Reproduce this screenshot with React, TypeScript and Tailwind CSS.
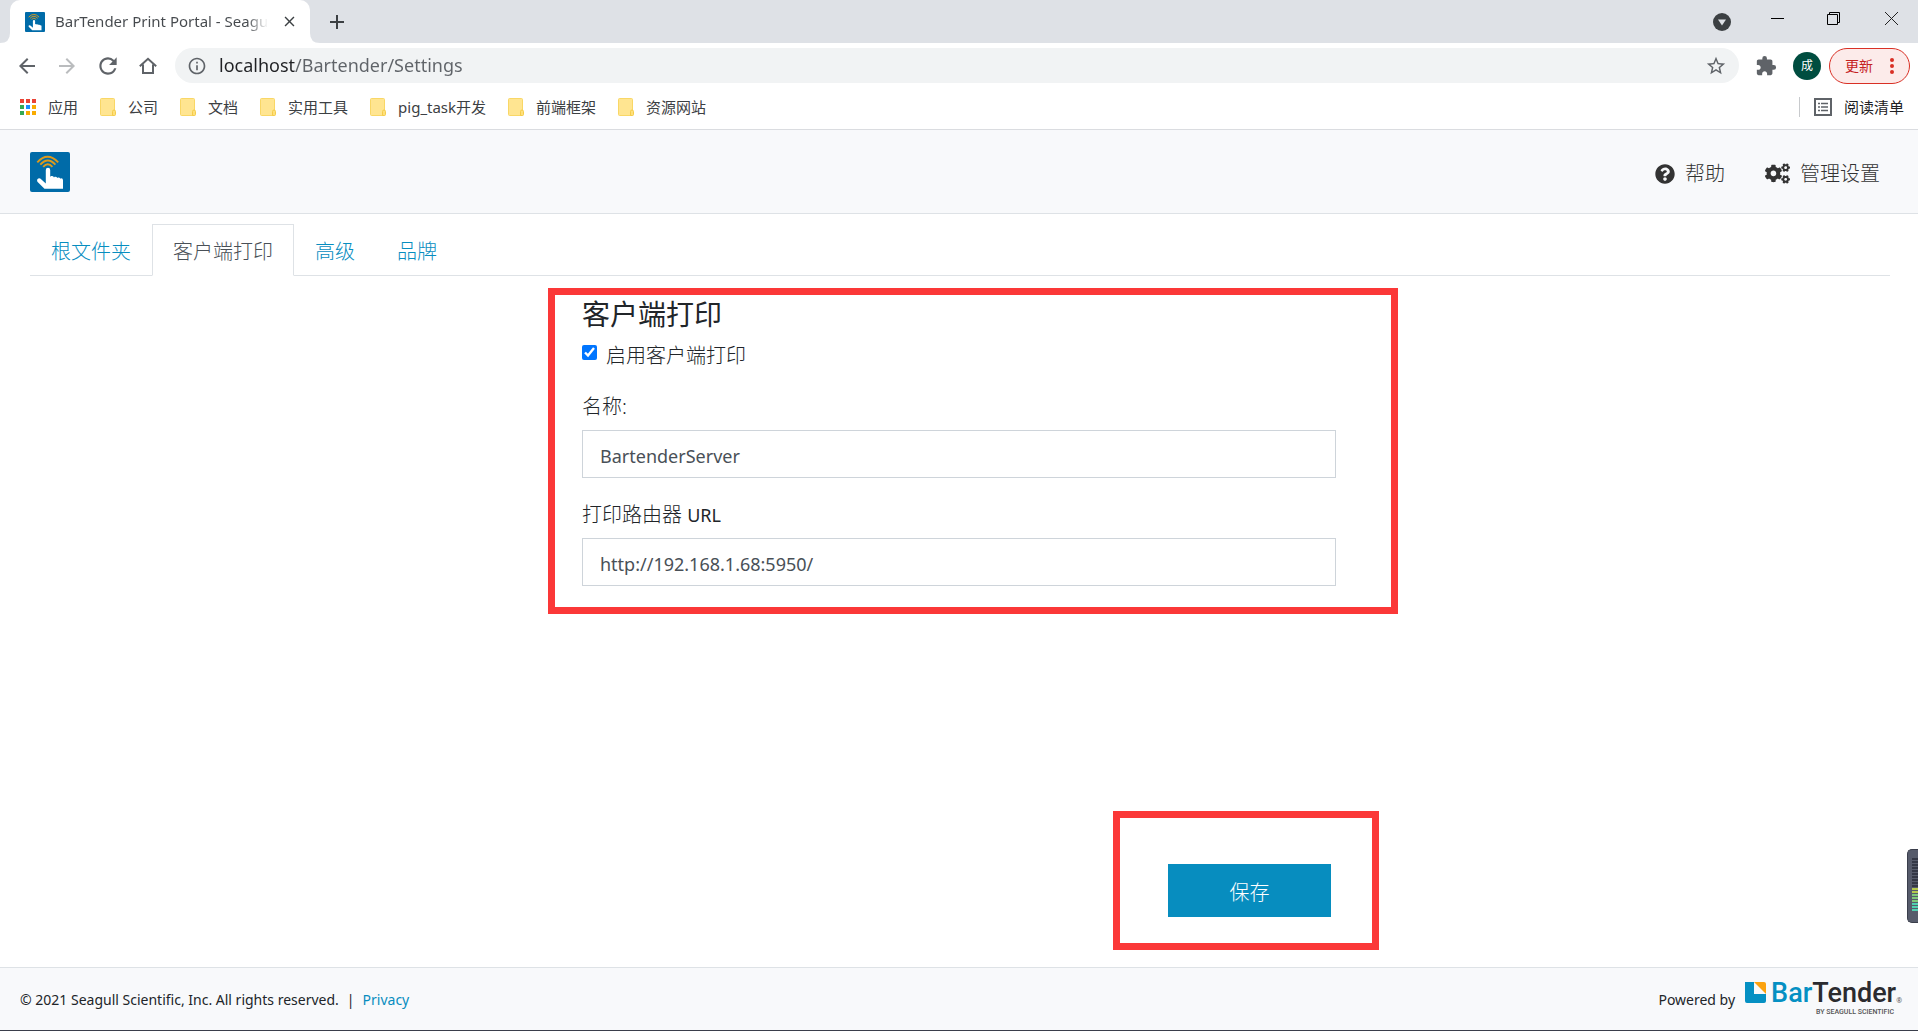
import React, { useState } from 'react';
import {
  MdArrowBack,
  MdArrowForward,
  MdRefresh,
  MdInfoOutline,
  MdStarBorder,
  MdExtension,
  MdClose,
  MdAdd,
} from 'react-icons/md';
import { FaQuestionCircle, FaCogs } from 'react-icons/fa';

const bookmarks = ['公司', '文档', '实用工具', 'pig_task开发', '前端框架', '资源网站'];
const tabs = ['根文件夹', '客户端打印', '高级', '品牌'];

const appDots = [
  'fill-[#ea4335]', 'fill-[#ea4335]', 'fill-[#ea4335]',
  'fill-[#34a853]', 'fill-[#1a8cff]', 'fill-[#f9ab00]',
  'fill-[#34a853]', 'fill-[#f9ab00]', 'fill-[#f9ab00]',
];

const meterBars = Array.from({ length: 18 }, (_, i) => i);

function PortalIcon({ className }: { className: string }) {
  return (
    <svg viewBox="0 0 40 40" className={className} aria-hidden="true">
      <rect width="40" height="40" rx="2" fill="#006ba8" />
      <g fill="none" stroke="#dd9a1c" strokeWidth="1.9">
        <path d="M7.3 10.3Q17.5 -0.8 28.2 10.3" />
        <path d="M10.3 12.6Q17.8 4.4 25.4 12.6" />
        <path d="M13.2 14.8Q17.8 9.6 22.4 14.8" />
      </g>
      <path
        d="M15.800 18a2.200 2.200 0 0 1 4.400 0v6.800l1-.8q2-.4 2.800 1.400l.6-.6q2-.4 2.700 1.300l.6-.5q1.800-.3 2.400 1.100l.6-.4q2.100-.2 2.100 1.900v8.500H14.500L7.400 29.700q-1-2.600 1-3.300 1.600-.4 3 1.200l4.400 4z"
        fill="#fff"
      />
    </svg>
  );
}

function FolderIcon() {
  return (
    <svg viewBox="0 0 16 18" className="h-[18px] w-4" aria-hidden="true">
      <rect x="0.500" y="0.500" width="14" height="17" rx="1" fill="#ffe591" stroke="#f9d766" />
      <path d="M12.500 17.500v-4q0-1.500 1.500-1.500t1.500 1.500v3q0 1-1 1z" fill="#ffe07a" stroke="#f5cc4a" />
    </svg>
  );
}

function TabStrip() {
  return (
    <div className="flex h-[43px] items-end bg-[#dee1e6]">
      <div className="relative ml-[10px] flex h-[43px] w-[300px] items-center rounded-t-[10px] bg-white pl-[15px] pr-3">
        <svg viewBox="0 0 10 10" className="absolute -left-[10px] bottom-0 h-[10px] w-[10px] fill-white" aria-hidden="true">
          <path d="M10 0v10H0Q10 10 10 0z" />
        </svg>
        <svg viewBox="0 0 10 10" className="absolute -right-[10px] bottom-0 h-[10px] w-[10px] fill-white" aria-hidden="true">
          <path d="M0 0v10h10Q0 10 0 0z" />
        </svg>
        <PortalIcon className="h-5 w-5 shrink-0" />
        <span className="ml-[10px] whitespace-nowrap bg-linear-to-r from-[#45494d] from-90% to-transparent bg-clip-text text-[15px] font-normal text-transparent">
          BarTender Print Portal - Seagu
        </span>
        <button className="ml-auto text-[#3c4043]" aria-label="Close tab">
          <MdClose size={17} />
        </button>
      </div>
      <button className="ml-[15px] flex h-[43px] items-center text-[#3c4043]" aria-label="New tab">
        <MdAdd size={24} />
      </button>
      <div className="ml-auto flex h-[43px] items-start pt-3">
        <button className="mr-10" aria-label="Search tabs">
          <svg viewBox="0 0 18 18" className="mt-px h-[18px] w-[18px]">
            <circle cx="9" cy="9" r="9" fill="#3c4043" />
            <path d="M5 6.500h8L9 12.500z" fill="#dee1e6" />
          </svg>
        </button>
        <button className="mr-[43px]" aria-label="Minimize">
          <svg viewBox="0 0 13 13" className="h-[13px] w-[13px]"><path d="M0 6.500h13" stroke="#000" /></svg>
        </button>
        <button className="mr-[45px]" aria-label="Restore">
          <svg viewBox="0 0 13 13" className="h-[13px] w-[13px]" fill="none" stroke="#000">
            <path d="M.5 2.500h10v10H.5zM2.500 2.500v-2h10v10h-2" />
          </svg>
        </button>
        <button className="mr-5" aria-label="Close window">
          <svg viewBox="0 0 13 13" className="h-[13px] w-[13px]"><path d="M0 0l13 13M13 0L0 13" stroke="#222" /></svg>
        </button>
      </div>
    </div>
  );
}

function Toolbar() {
  return (
    <div className="flex h-[45px] items-center bg-white pl-[15px] pr-2 text-[#5f6368]">
      <button aria-label="Back"><MdArrowBack size={24} /></button>
      <button className="ml-4 text-[#babcbe]" aria-label="Forward"><MdArrowForward size={24} /></button>
      <button className="ml-4" aria-label="Reload"><MdRefresh size={26} /></button>
      <button className="ml-[18px]" aria-label="Home">
        <svg viewBox="0 0 18 18" className="h-[18px] w-[18px]" fill="none" stroke="currentColor" strokeWidth="2">
          <path d="M.8 9.300L9 1.800l8.200 7.500M4 7.500V16h10V7.500" />
        </svg>
      </button>
      <div className="ml-[18px] flex h-[35px] flex-1 items-center rounded-full bg-[#f1f3f4] pl-3 pr-3">
        <MdInfoOutline size={20} />
        {/* host part is darker than the path */}
        <input
          type="text"
          aria-label="Address"
          defaultValue="localhost/Bartender/Settings"
          className="ml-3 min-w-0 flex-1 bg-linear-to-r from-[#202124] from-[76px] to-[#5f6368] to-[76px] bg-clip-text text-[18px] font-normal text-transparent outline-none"
        />
        <button aria-label="Bookmark this page"><MdStarBorder size={22} /></button>
      </div>
      <button className="ml-4" aria-label="Extensions"><MdExtension size={22} /></button>
      <button className="ml-4 h-7 w-7 rounded-full bg-[#004d40] text-[12px] font-normal text-white">成</button>
      <button className="ml-2 flex h-9 w-[81px] items-center rounded-full border border-[#d93025] bg-[#fcebea] pl-[15px] text-[14px] font-normal text-[#c5221f]">
        更新
        <svg viewBox="0 0 4 16" className="ml-[17px] h-4 w-1 fill-[#d93025]" aria-hidden="true">
          <circle cx="2" cy="2" r="2" />
          <circle cx="2" cy="8" r="2" />
          <circle cx="2" cy="14" r="2" />
        </svg>
      </button>
    </div>
  );
}

function BookmarksBar() {
  return (
    <div className="flex h-[42px] items-center border-b border-[#dadce0] bg-white pb-[3px] pl-5 pr-[14px] text-[15px] font-normal text-[#3c4043]">
      <a href="#" className="flex items-center gap-3">
        <svg viewBox="0 0 16 16" className="h-4 w-4" aria-hidden="true">
          {appDots.map((fill, i) => (
            <rect key={i} x={(i % 3) * 6} y={Math.floor(i / 3) * 6} width="4" height="4" className={fill} />
          ))}
        </svg>
        应用
      </a>
      {bookmarks.map((name) => (
        <a key={name} href="#" className="ml-[22px] flex items-center gap-3">
          <FolderIcon />
          {name}
        </a>
      ))}
      <div className="ml-auto h-5 w-px bg-[#c8cacd]" />
      <a href="#" className="ml-[14px] flex items-center gap-3 text-[#202124]">
        <svg viewBox="0 0 18 18" className="h-[18px] w-[18px]" fill="none" stroke="#5f6368" strokeWidth="2" aria-hidden="true">
          <path d="M1 1h16v16H1z" />
          <path d="M4 5.500h2M7 5.500h7M4 9h2M7 9h7M4 12.500h2M7 12.500h7" strokeWidth="1.500" />
        </svg>
        阅读清单
      </a>
    </div>
  );
}

function BarTenderLogo() {
  return (
    <a href="#" className="flex items-start" aria-label="BarTender by Seagull Scientific">
      <svg viewBox="0 0 21 21" className="h-[21px] w-[21px]" aria-hidden="true">
        <path d="M0 0h9v12h12v7q0 2-2 2H2q-2 0-2-2z" fill="#0590c3" />
        <path d="M9 0h10q2 0 2 2v10z" fill="#fba20f" />
      </svg>
      <span className="ml-[5px] flex flex-col items-end">
        <span className="flex items-end">
          <span className="font-[Roboto,sans-serif] text-[27px] leading-[22px] font-medium text-[#2b2b2f]">
            <span className="text-[#0590c3]">Bar</span>Tender
          </span>
          <span className="text-[7px] leading-[7px] text-[#555]">®</span>
        </span>
        <span className="mr-2 mt-1 font-[Roboto,sans-serif] text-[7px] leading-[8px] font-medium text-[#555]">
          BY SEAGULL SCIENTIFIC
        </span>
      </span>
    </a>
  );
}

function VolumeMeter() {
  return (
    <div className="absolute right-0 top-[849px] h-[74px] w-[11px] rounded-l-[5px] border border-r-0 border-[#3a3e4b] bg-[#565b6b]">
      <div className="ml-1 mt-2 flex flex-col gap-px">
        {meterBars.map((i) => (
          <span
            key={i}
            className={
              i < 10 ? 'h-[2px] bg-[#343846]' : i < 12 ? 'h-[2px] bg-[#b5c94c]' : i < 15 ? 'h-[2px] bg-[#7fc97a]' : 'h-[2px] bg-[#4fd0b0]'
            }
          />
        ))}
      </div>
    </div>
  );
}

function App() {
  const [active, setActive] = useState(1);
  const [enabled, setEnabled] = useState(true);

  return (
    <div className="relative flex min-h-screen flex-col overflow-hidden bg-white font-['Noto_Sans','Noto_Sans_CJK_SC',sans-serif] font-light text-[#212529]">
      {/* Browser */}
      <TabStrip />
      <Toolbar />
      <BookmarksBar />

      {/* Header */}
      <header className="flex h-[84px] items-center border-b border-[#dee2e6] bg-[#f8f9fb] pl-[30px] pr-[38px] text-[20px]">
        <PortalIcon className="h-10 w-10" />
        <a href="#" className="ml-auto flex items-center gap-[10px] pt-1 text-[#333]">
          <FaQuestionCircle size={20} />
          帮助
        </a>
        <a href="#" className="ml-10 flex items-center gap-[10px] pt-1 text-[#333]">
          <FaCogs size={25} />
          管理设置
        </a>
      </header>

      {/* Settings tabs */}
      <nav className="ml-[30px] mr-7 mt-[10px] flex border-b border-[#dee2e6] text-[20px]">
        {tabs.map((tab, i) => (
          <button
            key={tab}
            onClick={() => setActive(i)}
            className={
              i === active
                ? '-mb-px h-[52px] border border-[#dee2e6] border-b-white bg-white px-5 pt-1 text-[#495057]'
                : '-mb-px h-[52px] border border-transparent px-5 pt-1 text-[#078dbf]'
            }
          >
            {tab}
          </button>
        ))}
      </nav>

      {/* Client printing form */}
      <main className="mx-auto flex w-full max-w-[754px] flex-1 flex-col text-[20px]">
        <section className="relative pt-5">
          <h1 className="text-[28px] leading-9 font-normal">客户端打印</h1>
          <label className="mt-2 flex h-8 items-center">
            <input
              type="checkbox"
              checked={enabled}
              onChange={(e) => setEnabled(e.target.checked)}
              className="mr-[9px] mb-2 h-[15px] w-[15px] accent-[#0075ff]"
            />
            启用客户端打印
          </label>
          <label htmlFor="name" className="mt-5 block leading-[30px]">名称:</label>
          <input
            id="name"
            defaultValue="BartenderServer"
            className="mt-2 block h-12 w-full border border-[#ced4da] px-[17px] pt-1 text-[18px] font-normal text-[#495057]"
          />
          <label htmlFor="url" className="mt-[22px] block leading-[30px]">
            打印路由器 <span className="text-[18px] font-normal">URL</span>
          </label>
          <input
            id="url"
            defaultValue="http://192.168.1.68:5950/"
            className="mt-2 block h-12 w-full border border-[#ced4da] px-[17px] pt-1 text-[18px] font-normal text-[#495057]"
          />
          <div className="pointer-events-none absolute -bottom-7 -left-[34px] -right-[62px] top-3 border-[7px] border-[#fb3838]" />
        </section>

        <div className="relative mb-[50px] mr-[5px] mt-auto self-end">
          <button className="h-[53px] w-[163px] bg-[#078dbf] pt-1 text-white">保存</button>
          <div className="pointer-events-none absolute -bottom-[33px] -left-[55px] -right-12 -top-[53px] border-[7px] border-[#fb3838]" />
        </div>
      </main>

      {/* Footer */}
      <footer className="flex h-16 items-center border-b border-t border-b-[#3a3e4b] border-t-[#dee2e6] bg-[#f8f9fb] pl-5 pr-4 text-[14px] font-normal">
        <span>© 2021 Seagull Scientific, Inc. All rights reserved.</span>
        <span className="mx-2">|</span>
        <a href="#" className="text-[#078dbf]">Privacy</a>
        <span className="ml-auto mr-[10px]">Powered by</span>
        <BarTenderLogo />
      </footer>

      <VolumeMeter />
    </div>
  );
}

export default App;
